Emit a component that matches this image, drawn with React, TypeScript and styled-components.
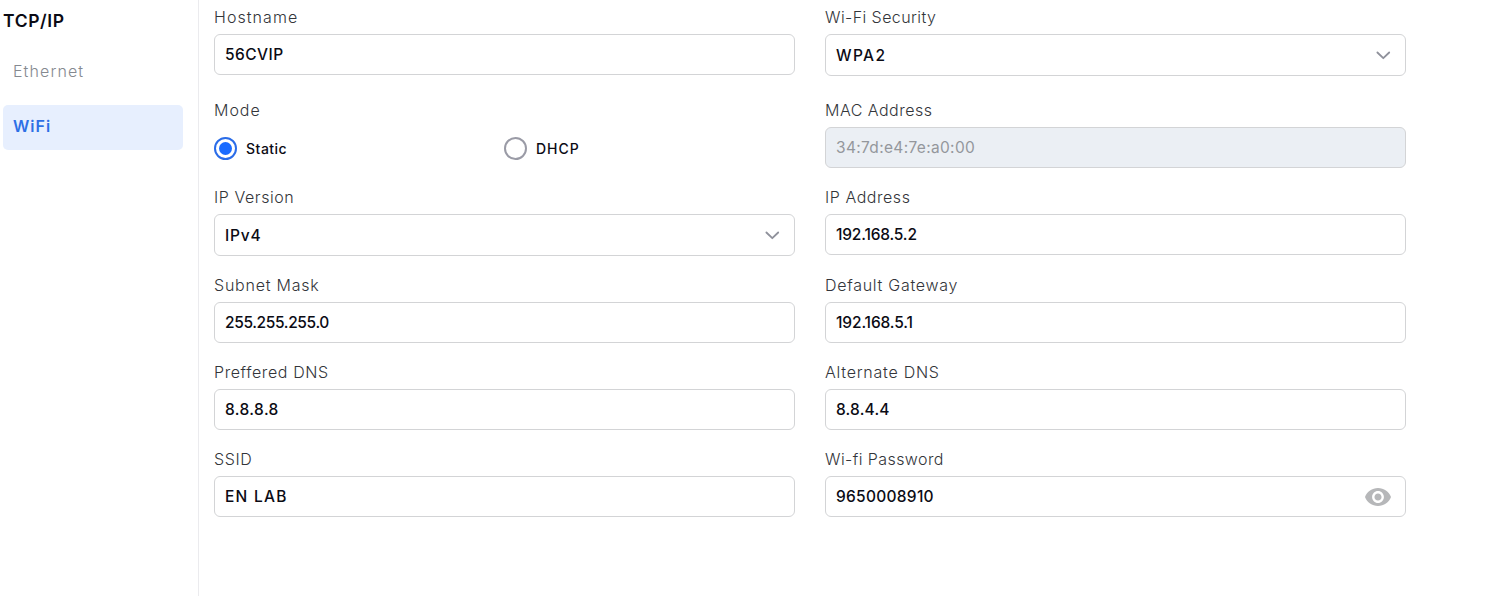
import React, { useState } from 'react';
import styled, { createGlobalStyle } from 'styled-components';

const GlobalStyle = createGlobalStyle`
  * { box-sizing: border-box; }
  body {
    margin: 0;
    background: #fff;
    color: #0b0b14;
    font-family: Inter, "Liberation Sans", sans-serif;
    overflow: hidden;
  }
`;

const Page = styled.div`
  display: flex;
  height: 596px;
`;

const Sidebar = styled.nav`
  width: 199px;
  flex: none;
  padding: 9px 15px 0 3px;
  border-right: 1px solid #ebebee;
`;

const Title = styled.h1`
  margin: 0 0 17px;
  font-size: 17.5px;
  line-height: 24px;
  font-weight: 600;
  letter-spacing: 0.62px;
`;

const NavItem = styled.div<{ $active?: boolean; $track: number }>`
  display: flex;
  align-items: center;
  height: 45px;
  padding: 0 10px 4px;
  margin-bottom: 10px;
  border-radius: 5px;
  cursor: pointer;
  font-size: 16px;
  letter-spacing: ${(p) => p.$track}px;
  font-weight: ${(p) => (p.$active ? 600 : 300)};
  color: ${(p) => (p.$active ? '#2d6fe6' : '#858990')};
  background: ${(p) => (p.$active ? '#e7effe' : 'transparent')};
`;

const Form = styled.main`
  display: grid;
  grid-template-columns: 581px 581px;
  grid-template-rows: 93px 87px 88px 87px 87px 87px;
  column-gap: 30px;
  padding: 7px 0 0 15px;
`;

const Field = styled.div`
  display: flex;
  flex-direction: column;
`;

const Label = styled.div<{ $track: number }>`
  height: 27px;
  line-height: 21px;
  font-size: 16px;
  font-weight: 300;
  color: #33353a;
  white-space: pre;
  letter-spacing: ${(p) => p.$track}px;
`;

const Control = styled.div<{ $kind?: string; $track: number }>`
  display: flex;
  align-items: center;
  justify-content: space-between;
  height: ${(p) => (p.$kind === 'select' ? 42 : 41)}px;
  padding: 0 14px 0 10px;
  border: 1px solid #d3d4d6;
  border-radius: 6px;
  background: ${(p) => (p.$kind === 'disabled' ? '#ebeff4' : '#fff')};
  color: ${(p) => (p.$kind === 'disabled' ? '#94979c' : '#0b0b14')};
  font-size: 15.5px;
  font-weight: ${(p) => (p.$kind === 'disabled' ? 400 : 500)};
  letter-spacing: ${(p) => p.$track}px;
`;

const Radios = styled.div`
  display: grid;
  grid-template-columns: 290px 290px;
  padding-top: 10px;
`;

const Radio = styled.div<{ $track: number }>`
  display: flex;
  align-items: center;
  gap: 9px;
  height: 23px;
  font-size: 14px;
  font-weight: 500;
  cursor: pointer;
  letter-spacing: ${(p) => p.$track}px;
`;

const Ring = styled.span<{ $checked: boolean }>`
  display: flex;
  align-items: center;
  justify-content: center;
  width: 23px;
  height: 23px;
  border-radius: 50%;
  border: 2px solid ${(p) => (p.$checked ? '#2a6ce8' : '#9a9ba6')};

  &::after {
    content: '';
    width: 13px;
    height: 13px;
    border-radius: 50%;
    background: ${(p) => (p.$checked ? '#1a6bff' : 'transparent')};
  }
`;

const Chevron = () => (
  <svg width="16" height="10" viewBox="0 0 16 10" fill="none" stroke="#8f919b" strokeWidth="1.8">
    <path d="M2.4 2.5 L8.3 8.2 L14.2 2.5" strokeLinecap="round" strokeLinejoin="round" />
  </svg>
);

const Eye = () => (
  <svg width="26" height="18" viewBox="1 4.5 22 15" preserveAspectRatio="none" fill="#b6b7b9">
    <path d="M12 4.5C7 4.5 2.73 7.61 1 12c1.73 4.39 6 7.5 11 7.5s9.27-3.11 11-7.5c-1.73-4.39-6-7.5-11-7.5zM12 17c-2.76 0-5-2.24-5-5s2.24-5 5-5 5 2.24 5 5-2.24 5-5 5zm0-8c-1.66 0-3 1.34-3 3s1.34 3 3 3 3-1.34 3-3-1.34-3-3-3z" />
  </svg>
);

type FieldSpec = {
  label: string;
  labelTrack: number;
  value?: string;
  track?: number;
  kind?: 'select' | 'disabled' | 'password' | 'radio';
};

const fields: FieldSpec[] = [
  { label: 'Hostname', labelTrack: 1.06, value: '56CVIP', track: 0.45 },
  { label: 'Wi-Fi Security', labelTrack: 0.42, value: 'WPA2', track: 1.4, kind: 'select' },
  { label: 'Mode', labelTrack: 0.97, kind: 'radio' },
  { label: 'MAC Address', labelTrack: 0.48, value: '34:7d:e4:7e:a0:00', track: 0.33, kind: 'disabled' },
  { label: 'IP Version', labelTrack: 0.57, value: 'IPv4', track: 0.8, kind: 'select' },
  { label: 'IP Address', labelTrack: 0.55, value: '192.168.5.2', track: -0.17 },
  { label: 'Subnet Mask', labelTrack: 0.77, value: '255.255.255.0', track: -0.36 },
  { label: 'Default Gateway', labelTrack: 0.72, value: '192.168.5.1', track: -0.12 },
  { label: 'Preffered DNS', labelTrack: 0.6, value: '8.8.8.8', track: 0.4 },
  { label: 'Alternate DNS', labelTrack: 0.74, value: '8.8.4.4', track: 0.18 },
  { label: 'SSID', labelTrack: 0.62, value: 'EN LAB', track: 1.25 },
  { label: 'Wi-fi Password', labelTrack: 0.43, value: '9650008910', track: 0.28, kind: 'password' },
];

function ModeRadios() {
  const [mode, setMode] = useState('Static');
  return (
    <Radios>
      <Radio $track={0.5} onClick={() => setMode('Static')}>
        <Ring $checked={mode === 'Static'} />
        Static
      </Radio>
      <Radio $track={1} onClick={() => setMode('DHCP')}>
        <Ring $checked={mode === 'DHCP'} />
        DHCP
      </Radio>
    </Radios>
  );
}

export default function App() {
  return (
    <>
      <GlobalStyle />
      <Page>
        <Sidebar>
          <Title>TCP/IP</Title>
          <NavItem $track={1.1}>Ethernet</NavItem>
          <NavItem $active $track={1.03}>WiFi</NavItem>
        </Sidebar>
        <Form>
          {fields.map((f) => (
            <Field key={f.label}>
              <Label $track={f.labelTrack}>{f.label}</Label>
              {f.kind === 'radio' ? (
                <ModeRadios />
              ) : (
                <Control $kind={f.kind} $track={f.track ?? 0}>
                  <span>{f.value}</span>
                  {f.kind === 'select' && <Chevron />}
                  {f.kind === 'password' && <Eye />}
                </Control>
              )}
            </Field>
          ))}
        </Form>
      </Page>
    </>
  );
}
